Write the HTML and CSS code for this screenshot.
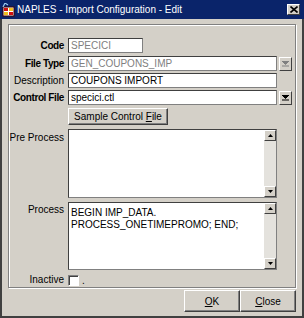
FILE: index.html
```html
<!DOCTYPE html>
<html lang="en">

<head>
    <meta charset="UTF-8">
    <title>NAPLES - Import Configuration - Edit</title>
    <link rel="stylesheet" href="styles.css">
</head>

<body>
    <div class="window">
        <div class="titlebar">
            <svg class="app-icon" width="13" height="14" viewBox="0 0 13 14">
                <rect x="1" y="4" width="11" height="9" fill="#ffffff" stroke="#400000" stroke-width="1"/>
                <rect x="2" y="5" width="4" height="3" fill="#d01010"/>
                <rect x="7" y="5" width="4" height="3" fill="#f0c020"/>
                <rect x="2" y="9" width="4" height="3" fill="#f0c020"/>
                <rect x="7" y="9" width="4" height="3" fill="#d01010"/>
                <path d="M1 4 L3 0 M3 0 L6 2" stroke="#9cc8f0" stroke-width="1.2" fill="none"/>
            </svg>
            <span class="title">NAPLES - Import Configuration - Edit</span>
            <span class="tb-close">
                <svg width="8" height="7" viewBox="0 0 8 7">
                    <path d="M0.5 0.5 L7.5 6.5 M7.5 0.5 L0.5 6.5" stroke="#000" stroke-width="1.6"/>
                </svg>
            </span>
        </div>

        <div class="frame">
            <div class="group">
                <div class="row r-code">
                    <span class="lbl bold">Code</span>
                    <div class="field short disabled">SPECICI</div>
                </div>
                <div class="row r-type">
                    <span class="lbl bold">File Type</span>
                    <div class="field disabled">GEN_COUPONS_IMP</div>
                    <span class="drop-btn">
                        <svg width="7" height="6" viewBox="0 0 7 6"><path d="M0 0 H7 L3.5 3.5 Z M0 5 H7" stroke="#808080" fill="#808080"/></svg>
                    </span>
                </div>
                <div class="row r-desc">
                    <span class="lbl">Description</span>
                    <div class="field">COUPONS IMPORT</div>
                </div>
                <div class="row r-ctrl">
                    <span class="lbl bold">Control File</span>
                    <div class="field">specici.ctl</div>
                    <span class="drop-btn">
                        <svg width="7" height="6" viewBox="0 0 7 6"><path d="M0 0 H7 L3.5 3.5 Z M0 5 H7" stroke="#000" fill="#000"/></svg>
                    </span>
                </div>
                <div class="row r-sample">
                    <span class="lbl"></span>
                    <span class="btn sample-btn"><span>Sample Control <u>F</u>ile</span></span>
                </div>
                <div class="row r-pre top">
                    <span class="lbl pad3">Pre Process</span>
                    <div class="ta ta-pre">
                        <div class="ta-text"></div>
                        <div class="sb">
                            <span class="sb-btn"><svg width="5" height="3" viewBox="0 0 5 3"><path d="M0 3 H5 L2.5 0 Z" fill="#000"/></svg></span>
                            <span class="sb-track"></span>
                            <span class="sb-btn"><svg width="5" height="3" viewBox="0 0 5 3"><path d="M0 0 H5 L2.5 3 Z" fill="#000"/></svg></span>
                        </div>
                    </div>
                </div>
                <div class="row r-proc top">
                    <span class="lbl pad2">Process</span>
                    <div class="ta ta-proc">
                        <div class="ta-text">BEGIN IMP_DATA.<br>PROCESS_ONETIMEPROMO; END;</div>
                        <div class="sb">
                            <span class="sb-btn"><svg width="5" height="3" viewBox="0 0 5 3"><path d="M0 3 H5 L2.5 0 Z" fill="#000"/></svg></span>
                            <span class="sb-track"></span>
                            <span class="sb-btn"><svg width="5" height="3" viewBox="0 0 5 3"><path d="M0 0 H5 L2.5 3 Z" fill="#000"/></svg></span>
                        </div>
                    </div>
                </div>
                <div class="row r-inact">
                    <span class="lbl">Inactive</span>
                    <span class="check"></span>
                    <span class="dot">.</span>
                </div>
            </div>

            <div class="actions">
                <span class="btn act-btn"><span><u>O</u>K</span></span>
                <span class="btn act-btn"><span><u>C</u>lose</span></span>
            </div>
        </div>
    </div>
</body>

</html>
```

FILE: styles.css
```css
html, body {
    margin: 0;
    width: 304px;
    height: 318px;
    overflow: hidden;
    background-color: #d4d0c8;
    font-family: "Liberation Sans", Arial, sans-serif;
    font-size: 10px;
    color: #000;
}

.window {
    display: flex;
    flex-direction: column;
    height: 318px;
}

.titlebar {
    height: 19px;
    background-color: #0a246a;
    color: #fff;
    display: flex;
    align-items: center;
    padding: 0 4px 0 2px;
    gap: 2px;
}
.title {
    flex: 1;
    font-size: 10px;
    white-space: nowrap;
}
.tb-close {
    width: 13px;
    height: 11px;
    box-sizing: border-box;
    background-color: #d4d0c8;
    border: 1px solid;
    border-color: #fff #404040 #404040 #fff;
    display: flex;
    align-items: center;
    justify-content: center;
}

.frame {
    flex: 1;
    border-left: 2px solid #404040;
    border-right: 2px solid #404040;
    border-bottom: 2px solid #404040;
    padding: 5px 6px 0 6px;
}

.group {
    height: 264px;
    box-sizing: border-box;
    border: 1px solid #808080;
    box-shadow: inset 1px 1px #fff, 1px 1px #fff;
    padding-top: 13px;
}

.row {
    display: flex;
    align-items: center;
    gap: 4px;
}
.row.top {
    align-items: flex-start;
}
.lbl {
    width: 55px;
    flex: none;
    text-align: right;
    white-space: nowrap;
    line-height: 12px;
    direction: rtl;
}
.bold {
    font-weight: bold;
    letter-spacing: -0.4px;
}
.pad3 {
    padding-top: 3px;
}
.pad2 {
    padding-top: 2px;
}

.r-type { margin-top: 3px; }
.r-desc { margin-top: 2px; }
.r-ctrl { margin-top: 2px; }
.r-sample { margin-top: 3px; }
.r-pre { margin-top: 4px; }
.r-proc { margin-top: 4px; }
.r-inact { margin-top: 4px; }

.field {
    width: 209px;
    height: 15px;
    box-sizing: border-box;
    background-color: #fff;
    border: 1px solid;
    border-color: #404040 #808080 #808080 #404040;
    padding-left: 2px;
    line-height: 13px;
    white-space: nowrap;
    overflow: hidden;
}
.field.short {
    width: 75px;
}
.field.disabled {
    color: #808080;
}

.drop-btn {
    width: 13px;
    height: 14px;
    box-sizing: border-box;
    margin-left: -2px;
    background-color: #d4d0c8;
    border: 1px solid;
    border-color: #fff #404040 #404040 #fff;
    display: flex;
    align-items: center;
    justify-content: center;
}

.btn {
    box-sizing: border-box;
    background-color: #d4d0c8;
    border: 1px solid;
    border-color: #fff #404040 #404040 #fff;
    box-shadow: inset -1px -1px #808080;
    display: flex;
    align-items: center;
    justify-content: center;
    white-space: nowrap;
}
.sample-btn {
    width: 100px;
    height: 17px;
}

.ta {
    width: 209px;
    box-sizing: border-box;
    background-color: #fff;
    border: 1px solid;
    border-color: #404040 #808080 #808080 #404040;
    display: flex;
}
.ta-pre {
    height: 69px;
}
.ta-proc {
    height: 68px;
}
.ta-text {
    flex: 1;
    padding: 4px 2px;
    line-height: 12px;
}

.sb {
    width: 12px;
    display: flex;
    flex-direction: column;
    background-color: #e4e2dd;
}
.sb-btn {
    height: 11px;
    box-sizing: border-box;
    background-color: #d4d0c8;
    border: 1px solid;
    border-color: #fff #404040 #404040 #fff;
    display: flex;
    align-items: center;
    justify-content: center;
}
.sb-track {
    flex: 1;
}

.check {
    width: 11px;
    height: 11px;
    box-sizing: border-box;
    background-color: #fff;
    border: 1px solid;
    border-color: #808080 #fff #fff #808080;
    box-shadow: inset 1px 1px #404040;
}
.dot {
    margin-left: -1px;
}

.actions {
    display: flex;
    justify-content: flex-end;
    margin-top: 2px;
}
.act-btn {
    width: 56px;
    height: 22px;
}
```
